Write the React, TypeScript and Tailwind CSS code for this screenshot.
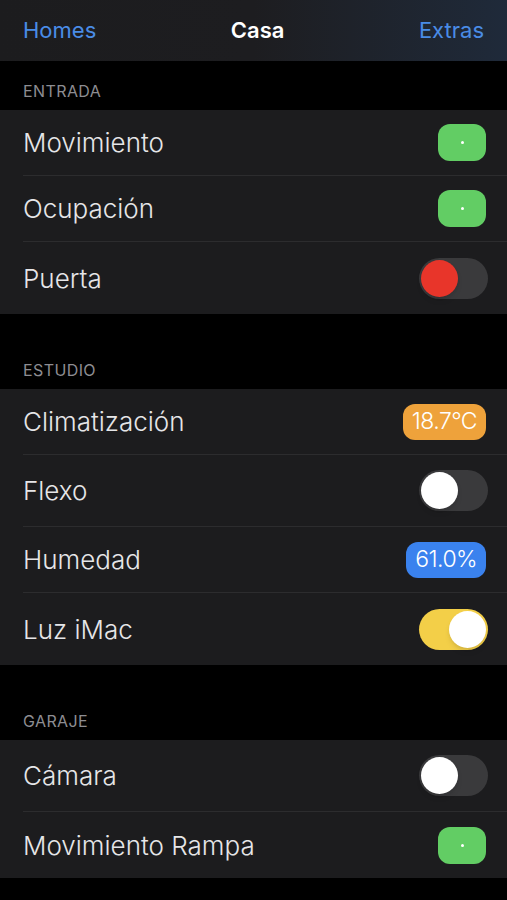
import React from 'react';

type Item =
  | { label: string; kind: 'dot' }
  | { label: string; kind: 'badge'; text: string; color: string }
  | { label: string; kind: 'toggle'; on: boolean; knob?: string; track?: string };

const sections: { title: string; items: Item[]; head: string }[] = [
  {
    title: 'ENTRADA',
    head: 'h-[49px]',
    items: [
      { label: 'Movimiento', kind: 'dot' },
      { label: 'Ocupación', kind: 'dot' },
      { label: 'Puerta', kind: 'toggle', on: false, knob: 'bg-[#e8352a]' },
    ],
  },
  {
    title: 'ESTUDIO',
    head: 'h-[75px]',
    items: [
      { label: 'Climatización', kind: 'badge', text: '18.7°C', color: 'bg-[#eea23b]' },
      { label: 'Flexo', kind: 'toggle', on: false },
      { label: 'Humedad', kind: 'badge', text: '61.0%', color: 'bg-[#3a82ee]' },
      { label: 'Luz iMac', kind: 'toggle', on: true, track: 'bg-[#f3cf48]' },
    ],
  },
  {
    title: 'GARAJE',
    head: 'h-[75px]',
    items: [
      { label: 'Cámara', kind: 'toggle', on: false },
      { label: 'Movimiento Rampa', kind: 'dot' },
    ],
  },
];

const Accessory = ({ item }: { item: Item }) => {
  if (item.kind === 'dot') {
    return (
      <div className="w-[48px] h-[37px] mr-[2px] rounded-[12px] bg-[#62cd64] flex items-center justify-center">
        <span className="w-[3px] h-[3px] rounded-full bg-white" />
      </div>
    );
  }
  if (item.kind === 'badge') {
    return (
      <div className={`h-[36px] mr-[2px] px-[9px] rounded-[12px] flex items-center text-white text-[23px] font-light tracking-tight ${item.color}`}>
        {item.text}
      </div>
    );
  }
  return (
    <div
      className={`w-[69px] h-[41px] rounded-full p-[2px] flex ${item.on ? 'justify-end' : 'justify-start'} ${item.track ?? 'bg-[#3a3a3c]'}`}
    >
      <span className={`w-[37px] h-[37px] rounded-full shadow-md ${item.knob ?? 'bg-white'}`} />
    </div>
  );
};

export default function App() {
  return (
    <div className="w-[507px] h-[900px] bg-black overflow-hidden font-['Inter',sans-serif]">
      <header className="h-[61px] flex items-center justify-between px-[23px] bg-gradient-to-r from-[#1c1c1e] via-[#1d1d20] to-[#1f2a3a] text-[22px]">
        <button className="text-[#4a8ce6]">Homes</button>
        <h1 className="text-white font-semibold">Casa</h1>
        <button className="text-[#4a8ce6]">Extras</button>
      </header>

      {sections.map((s) => (
        <section key={s.title}>
          <div className={`${s.head} flex items-end pb-[7px] px-[23px] text-[16px] text-[#8d8d92] tracking-wide`}>
            {s.title}
          </div>
          <div className="bg-[#1c1c1e]">
            {s.items.map((item, i) => (
              <div key={item.label} className="pl-[23px]">
                <div
                  className={`flex items-center justify-between pr-[19px] ${item.kind === 'toggle' ? 'h-[72px]' : 'h-[66px]'} ${
                    i < s.items.length - 1 ? 'border-b border-[#2c2c2e]' : ''
                  }`}
                >
                  <span className="text-[26px] font-light text-[#e6e6e8]">{item.label}</span>
                  <Accessory item={item} />
                </div>
              </div>
            ))}
          </div>
        </section>
      ))}
    </div>
  );
}
